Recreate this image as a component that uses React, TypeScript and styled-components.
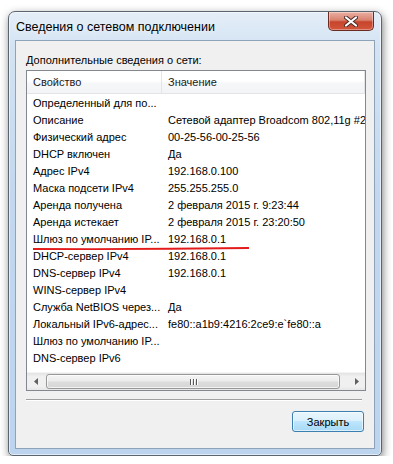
import styled, { createGlobalStyle } from "styled-components";

const GlobalStyle = createGlobalStyle`
  html, body {
    margin: 0;
    padding: 0;
    background: #ffffff;
  }
  body {
    font-family: "Liberation Sans", Arial, sans-serif;
    font-size: 11px;
    color: #000;
  }
`

type Prop = { name: string; value?: string; marked?: boolean }

const props: Prop[] = [
    { name: "Определенный для по..." },
    { name: "Описание", value: "Сетевой адаптер Broadcom 802,11g #2" },
    { name: "Физический адрес", value: "00-25-56-00-25-56" },
    { name: "DHCP включен", value: "Да" },
    { name: "Адрес IPv4", value: "192.168.0.100" },
    { name: "Маска подсети IPv4", value: "255.255.255.0" },
    { name: "Аренда получена", value: "2 февраля 2015 г. 9:23:44" },
    { name: "Аренда истекает", value: "2 февраля 2015 г. 23:20:50" },
    { name: "Шлюз по умолчанию IP...", value: "192.168.0.1", marked: true },
    { name: "DHCP-сервер IPv4", value: "192.168.0.1" },
    { name: "DNS-сервер IPv4", value: "192.168.0.1" },
    { name: "WINS-сервер IPv4" },
    { name: "Служба NetBIOS через...", value: "Да" },
    { name: "Локальный IPv6-адрес...", value: "fe80::a1b9:4216:2ce9:e`fe80::a" },
    { name: "Шлюз по умолчанию IP..." },
    { name: "DNS-сервер IPv6" },
]

export default function App() {
    return (
        <>
            <GlobalStyle/>
            <Window>
                <TitleBar>
                    <Title>Сведения о сетевом подключении</Title>
                    <CloseButton>
                        <svg width="14" height="11" viewBox="0 0 14 11">
                            <path d="M2 1.5 L12 9.5 M12 1.5 L2 9.5" stroke="#4a2a24" strokeWidth="4" strokeLinecap="round"/>
                            <path d="M2 1.5 L12 9.5 M12 1.5 L2 9.5" stroke="#ffffff" strokeWidth="2.2" strokeLinecap="round"/>
                        </svg>
                    </CloseButton>
                </TitleBar>
                <Client>
                    <Label>Дополнительные сведения о сети:</Label>
                    <ListBox>
                        <Header>
                            <HeaderCell $width={135}>Свойство</HeaderCell>
                            <HeaderCell $width={203}>Значение</HeaderCell>
                        </Header>
                        <Rows>
                            {props.map((p, i) => (
                                <Row key={i}>
                                    <NameCell>{p.name}</NameCell>
                                    <ValueCell>{p.value}</ValueCell>
                                    {p.marked && (
                                        <Mark width="218" height="5" viewBox="0 0 218 5">
                                            <path d="M1 3 Q110 3.6 217 2" stroke="#e31b1b" strokeWidth="1.8" fill="none"/>
                                        </Mark>
                                    )}
                                </Row>
                            ))}
                        </Rows>
                        <HScroll>
                            <ArrowBtn>
                                <svg width="4" height="7" viewBox="0 0 4 7"><path d="M4 0 L0 3.5 L4 7 Z" fill="#606060"/></svg>
                            </ArrowBtn>
                            <Track>
                                <Thumb>
                                    <Grip/>
                                    <Grip/>
                                    <Grip/>
                                </Thumb>
                            </Track>
                            <ArrowBtn>
                                <svg width="4" height="7" viewBox="0 0 4 7"><path d="M0 0 L4 3.5 L0 7 Z" fill="#606060"/></svg>
                            </ArrowBtn>
                        </HScroll>
                    </ListBox>
                    <Separator/>
                    <Footer>
                        <CloseAction>Закрыть</CloseAction>
                    </Footer>
                </Client>
            </Window>
        </>
    )
}

const Window = styled.div`
  margin: 11px 0 0 8px;
  width: 374px;
  height: 445px;
  box-sizing: border-box;
  border: 1px solid #5b6570;
  border-radius: 7px 7px 5px 5px;
  background: linear-gradient(180deg, #e4eef8 0%, #d3e3f3 8%, #c3d8ef 40%, #bcd4ee 100%);
  box-shadow: 1px 3px 9px rgba(0, 0, 0, 0.5), inset 0 0 0 1px rgba(255, 255, 255, 0.55);
  display: flex;
  flex-direction: column;
  padding: 0 6px 6px 6px;
`

const TitleBar = styled.div`
  height: 28px;
  display: flex;
  align-items: flex-start;
  justify-content: space-between;
`

const Title = styled.div`
  font-size: 12.5px;
  padding: 8px 0 0 1px;
  color: #000;
  text-shadow: 0 0 6px rgba(255, 255, 255, 0.9);
`

const CloseButton = styled.div`
  width: 46px;
  height: 19px;
  margin-right: 1px;
  box-sizing: border-box;
  border: 1px solid #6b2b20;
  border-top: none;
  border-radius: 0 0 5px 5px;
  background: linear-gradient(180deg, #eab0a3 0%, #d9826f 45%, #c7442b 55%, #d2573c 100%);
  box-shadow: inset 0 0 0 1px rgba(255, 255, 255, 0.35);
  display: flex;
  align-items: center;
  justify-content: center;
`

const Client = styled.div`
  flex: 1;
  box-sizing: border-box;
  border: 1px solid #8ea2b8;
  background: #f0f0f0;
  padding: 11px 9px 0 10px;
  display: flex;
  flex-direction: column;
`

const Label = styled.div`
  line-height: 16px;
  height: 16px;
  margin-bottom: 2px;
  white-space: nowrap;
`

const ListBox = styled.div`
  width: 340px;
  height: 321px;
  box-sizing: border-box;
  border: 1px solid #828790;
  background: #ffffff;
  display: flex;
  flex-direction: column;
  overflow: hidden;
`

const Header = styled.div`
  height: 23px;
  flex-shrink: 0;
  box-sizing: border-box;
  display: flex;
  border-bottom: 1px solid #e2e4e8;
  background: linear-gradient(180deg, #ffffff 0%, #ffffff 45%, #f6f7f9 55%, #f3f4f6 100%);
`

const HeaderCell = styled.div<{ $width: number }>`
  width: ${p => p.$width}px;
  flex-shrink: 0;
  box-sizing: border-box;
  padding-left: 6px;
  line-height: 22px;
  border-right: 1px solid #e3e5e8;
  color: #1a1a1a;
  white-space: nowrap;
`

const Rows = styled.div`
  flex: 1;
  padding-top: 1px;
  overflow: hidden;
`

const Row = styled.div`
  position: relative;
  display: flex;
  height: 17px;
  line-height: 17px;
  white-space: nowrap;
`

const NameCell = styled.div`
  width: 135px;
  flex-shrink: 0;
  box-sizing: border-box;
  padding-left: 6px;
  overflow: hidden;
`

const ValueCell = styled.div`
  padding-left: 6px;
  white-space: nowrap;
`

const Mark = styled.svg`
  position: absolute;
  left: 5px;
  top: 15px;
`

const HScroll = styled.div`
  height: 17px;
  flex-shrink: 0;
  display: flex;
  background: linear-gradient(180deg, #e3e3e3 0%, #f0f0f0 20%, #f0f0f0 80%, #e6e6e6 100%);
  border-top: 1px solid #f4f4f4;
`

const ArrowBtn = styled.div`
  width: 17px;
  flex-shrink: 0;
  display: flex;
  align-items: center;
  justify-content: center;
`

const Track = styled.div`
  flex: 1;
  display: flex;
  align-items: stretch;
  padding: 1px 8px 1px 2px;
`

const Thumb = styled.div`
  flex: 1;
  box-sizing: border-box;
  border: 1px solid #979797;
  border-radius: 3px;
  background: linear-gradient(180deg, #f4f4f4 0%, #ececec 45%, #dcdcdc 55%, #d6d6d6 100%);
  box-shadow: inset 0 0 0 1px rgba(255, 255, 255, 0.7);
  display: flex;
  align-items: center;
  justify-content: center;
  gap: 2px;
`

const Grip = styled.div`
  width: 1px;
  height: 6px;
  background: #5a5a5a;
  box-shadow: 1px 0 0 #ffffff;
`

const Separator = styled.div`
  margin: 8px 3px 0 0;
  height: 0;
  border-top: 1px solid #a0a0a0;
  border-bottom: 1px solid #ffffff;
`

const Footer = styled.div`
  display: flex;
  justify-content: flex-end;
  padding-top: 10px;
`

const CloseAction = styled.div`
  width: 72px;
  height: 21px;
  box-sizing: border-box;
  border: 1px solid #3c7fb1;
  border-radius: 3px;
  background: linear-gradient(180deg, #eaf6fd 0%, #d9f0fc 49%, #bee6fd 50%, #a7d9f5 100%);
  box-shadow: inset 0 0 0 1px rgba(255, 255, 255, 0.6);
  display: flex;
  align-items: center;
  justify-content: center;
  margin-right: 1px;
`
